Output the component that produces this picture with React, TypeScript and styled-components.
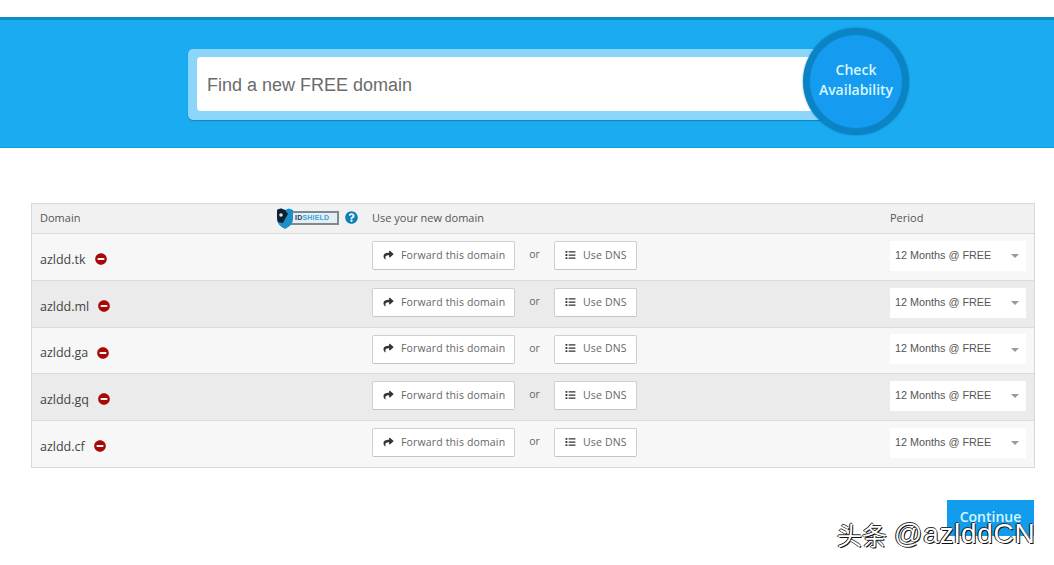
import React from "react";
import styled, { createGlobalStyle } from "styled-components";
import { FaShare, FaList, FaMinusCircle, FaQuestionCircle } from "react-icons/fa";

const Global = createGlobalStyle`
  html, body { margin: 0; padding: 0; background: #fff; }
  body { font-family: "Open Sans", "Liberation Sans", sans-serif; overflow: hidden; }
`;

const Page = styled.div`
  position: relative;
  width: 1054px;
  height: 565px;
  overflow: hidden;
  padding-top: 17px;
  box-sizing: border-box;
`;

const Banner = styled.header`
  height: 131px;
  box-sizing: border-box;
  background: #1aabf0;
  border-top: 3px solid #0e8cc8;
  border-bottom: 1px solid #129ee0;
  padding: 29px 0 0 188px;
`;

const SearchShell = styled.div`
  position: relative;
  width: 642px;
  height: 71px;
  box-sizing: border-box;
  padding: 8px 0 9px 9px;
  background: #8dd6fb;
  border-radius: 5px;
  box-shadow: 0 1px 1px rgba(10, 110, 170, 0.6);
`;

const SearchInput = styled.div`
  height: 54px;
  box-sizing: border-box;
  padding-left: 10px;
  background: #fff;
  border-radius: 4px 0 0 4px;
  font: 18px/56px "Liberation Sans", sans-serif;
  color: #6b6b6b;
`;

const CheckButton = styled.div`
  position: absolute;
  left: 615px;
  top: -21px;
  width: 106px;
  height: 107px;
  box-sizing: border-box;
  padding-bottom: 4px;
  border-radius: 50%;
  border: 7px solid #0b84c6;
  background: #159cf0;
  box-shadow: 0 0 2px rgba(8, 100, 160, 0.7);
  display: flex;
  align-items: center;
  justify-content: center;
  text-align: center;
  font-size: 14px;
  font-weight: 600;
  line-height: 20px;
  color: #d8f6ff;
`;

const Table = styled.section`
  width: 1004px;
  margin: 55px 0 0 31px;
  box-sizing: border-box;
  border: 1px solid #d9d9d9;
`;

const HeaderRow = styled.div`
  display: grid;
  grid-template-columns: 332px 1fr 136px;
  align-items: center;
  height: 30px;
  box-sizing: border-box;
  padding: 0 8px 2px;
  background: #f1f1f1;
  border-bottom: 1px solid #d9d9d9;
  font-size: 11px;
  color: #555;
`;

const DomainHead = styled.div`
  display: flex;
  align-items: center;
  justify-content: space-between;
  padding-right: 14px;
`;

const Shield = styled.div`
  display: flex;
  align-items: center;
  gap: 5px;
`;

const Logo = styled.div`
  position: relative;
  display: flex;
  align-items: center;
  width: 64px;
  height: 20px;
`;

const LogoBox = styled.span`
  margin-left: 13px;
  width: 50px;
  height: 14px;
  box-sizing: border-box;
  border: 2px solid #7c8a96;
  background: #e6eef3;
  padding-left: 4px;
  font: bold 7px/10px "Liberation Sans", sans-serif;
  letter-spacing: 0.2px;
  color: #3aa5d8;
  white-space: nowrap;
  b { color: #1c3c58; }
`;

const LogoMark = styled.svg`
  position: absolute;
  left: 0;
  top: 0;
`;

const HelpIcon = styled(FaQuestionCircle)`
  width: 13px;
  height: 13px;
  color: #0c80b8;
`;

const Row = styled.div<{ $even: boolean; $height: number }>`
  display: grid;
  grid-template-columns: 332px 1fr 136px;
  align-items: center;
  height: ${(p) => p.$height}px;
  box-sizing: border-box;
  padding: 0 8px;
  background: ${(p) => (p.$even ? "#ebebeb" : "#f7f7f7")};
  border-bottom: 1px solid #dcdcdc;
  &:last-child { border-bottom: 0; }
`;

const DomainCell = styled.div`
  display: flex;
  align-items: center;
  gap: 9px;
  font-size: 12.5px;
  color: #444;
  padding-top: 4px;
`;

const RemoveIcon = styled(FaMinusCircle)`
  width: 12px;
  height: 12px;
  color: #a80808;
`;

const Actions = styled.div`
  display: flex;
  align-items: center;
  padding-bottom: 3px;
`;

const ActionButton = styled.div<{ $width: number }>`
  display: flex;
  align-items: center;
  gap: 7px;
  width: ${(p) => p.$width}px;
  height: 29px;
  box-sizing: border-box;
  padding: 0 0 2px 10px;
  background: #fff;
  border: 1px solid #cfcfcf;
  border-bottom-color: #c4c4c4;
  border-radius: 2px;
  font-size: 10.5px;
  letter-spacing: 0.15px;
  color: #666;
  white-space: nowrap;
  svg { width: 11px; height: 10px; color: #333; flex: none; }
`;

const Or = styled.span`
  width: 39px;
  text-align: center;
  font-size: 10.5px;
  color: #666;
  padding-bottom: 3px;
`;

const PeriodSelect = styled.div`
  display: flex;
  align-items: center;
  justify-content: space-between;
  height: 30px;
  margin-bottom: 3px;
  padding: 0 7px 2px 5px;
  box-sizing: border-box;
  background: #fff;
  font: 10.8px "Liberation Sans", sans-serif;
  color: #555;
`;

const Caret = styled.i`
  margin-top: 3px;
  width: 0;
  height: 0;
  border-left: 4px solid transparent;
  border-right: 4px solid transparent;
  border-top: 4px solid #999;
`;

const Footer = styled.div`
  display: flex;
  justify-content: flex-end;
  padding: 32px 20px 0 0;
`;

const ContinueButton = styled.div`
  width: 87px;
  height: 36px;
  box-sizing: border-box;
  padding-top: 7px;
  background: #129cee;
  text-align: center;
  font-size: 14px;
  font-weight: 600;
  color: #d8f6ff;
`;

const Watermark = styled.div`
  position: absolute;
  left: 837px;
  top: 517px;
  display: flex;
  gap: 7px;
  font: 25px/34px "Noto Sans CJK SC", sans-serif;
  color: #fff;
  text-shadow: 1px 1px 0 #111, -1px 0 0 #111, 0 -1px 0 #333;
  white-space: nowrap;
`;

const Handle = styled.span`
  font: 28px/34px "Liberation Sans", sans-serif;
  letter-spacing: 0.7px;
`;

const domains = [
  { name: "azldd.tk", height: 47 },
  { name: "azldd.ml", height: 47 },
  { name: "azldd.ga", height: 46 },
  { name: "azldd.gq", height: 47 },
  { name: "azldd.cf", height: 46 },
];

export default function App() {
  return (
    <Page>
      <Global />
      <Banner>
        <SearchShell>
          <SearchInput>Find a new FREE domain</SearchInput>
          <CheckButton>Check<br />Availability</CheckButton>
        </SearchShell>
      </Banner>
      <Table>
        <HeaderRow>
          <DomainHead>
            <span>Domain</span>
            <Shield>
              <Logo>
                <LogoBox><b>ID</b>SHIELD</LogoBox>
                <LogoMark width="18" height="21" viewBox="0 0 18 21">
                  <path d="M1 2 L5 0.5 L9 2 L13 0.5 L17 2 L17 11 Q17 17 9 21 Q1 17 1 11 Z" fill="#1b8fcb" />
                  <path d="M1 3 Q1 1 3 1 L5 0.5 L9 2 L12 6 L9 11 L7 15 L2 14 L1 10 Z" fill="#10202e" />
                  <circle cx="5" cy="7" r="1.8" fill="#d8e6ee" />
                </LogoMark>
              </Logo>
              <HelpIcon />
            </Shield>
          </DomainHead>
          <span>Use your new domain</span>
          <span>Period</span>
        </HeaderRow>
        {domains.map((d, i) => (
          <Row key={d.name} $even={i % 2 === 1} $height={d.height}>
            <DomainCell>
              <span>{d.name}</span>
              <RemoveIcon />
            </DomainCell>
            <Actions>
              <ActionButton $width={143}><FaShare />Forward this domain</ActionButton>
              <Or>or</Or>
              <ActionButton $width={83}><FaList />Use DNS</ActionButton>
            </Actions>
            <PeriodSelect>
              <span>12 Months @ FREE</span>
              <Caret />
            </PeriodSelect>
          </Row>
        ))}
      </Table>
      <Footer>
        <ContinueButton>Continue</ContinueButton>
      </Footer>
      <Watermark>
        <span>头条</span>
        <Handle>@azlddCN</Handle>
      </Watermark>
    </Page>
  );
}
